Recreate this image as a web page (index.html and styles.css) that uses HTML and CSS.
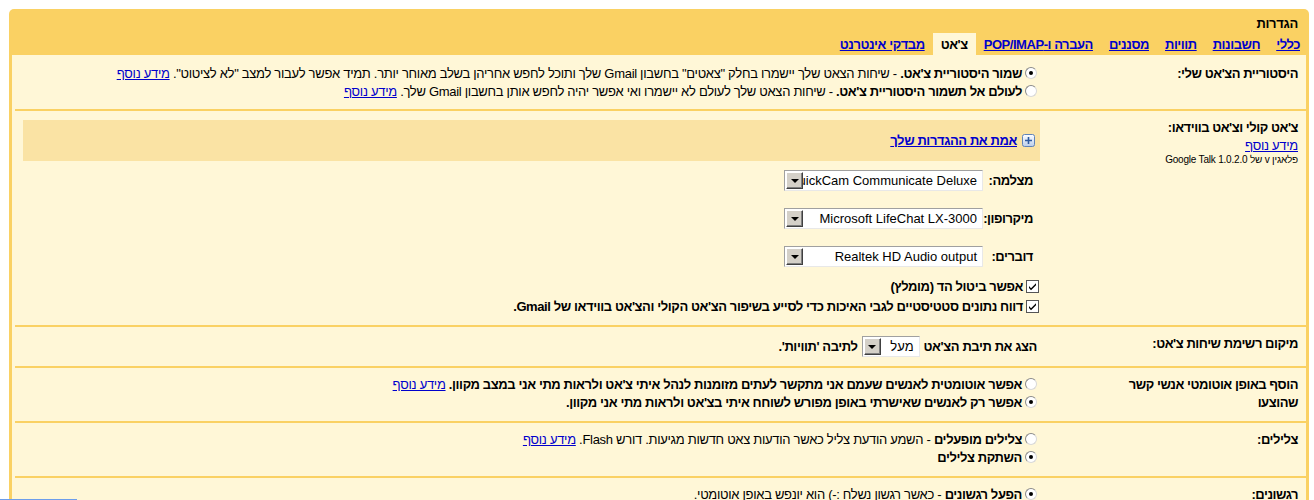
FILE: index.html
```html
<!DOCTYPE html>
<html lang="he" dir="rtl">
<head>
<meta charset="utf-8">
<title>הגדרות</title>
<link rel="stylesheet" href="styles.css">
</head>
<body>
<div class="settings">
  <div class="head">
    <div class="title">הגדרות</div>
    <div class="tabs">
      <a class="tab" href="#">כללי</a>
      <a class="tab" href="#">חשבונות</a>
      <a class="tab" href="#">תוויות</a>
      <a class="tab" href="#">מסננים</a>
      <a class="tab" href="#">העברה ו-POP/IMAP</a>
      <span class="tab active">צ'אט</span>
      <a class="tab" href="#">מבדקי אינטרנט</a>
    </div>
  </div>

  <div class="content">
    <div class="row row-first">
      <div class="label">היסטוריית הצ'אט שלי:</div>
      <div class="value">
        <div class="opt"><span class="radio on"></span><span class="txt"><b>שמור היסטוריית צ'אט.</b> - שיחות הצאט שלך יישמרו בחלק "צאטים" בחשבון Gmail שלך ותוכל לחפש אחריהן בשלב מאוחר יותר. תמיד אפשר לעבור למצב "לא לציטוט". <a href="#">מידע נוסף</a></span></div>
        <div class="opt"><span class="radio"></span><span class="txt"><b>לעולם אל תשמור היסטוריית צ'אט.</b> - שיחות הצאט שלך לעולם לא יישמרו ואי אפשר יהיה לחפש אותן בחשבון Gmail שלך. <a href="#">מידע נוסף</a></span></div>
      </div>
    </div>

    <div class="row">
      <div class="label">
        <div>צ'אט קולי וצ'אט בווידאו:</div>
        <a class="more" href="#">מידע נוסף</a>
        <div class="plugin">פלאגין v של Google Talk 1.0.2.0</div>
      </div>
      <div class="value">
        <div class="verify">
          <svg class="plus" width="13" height="13" viewBox="0 0 13 13"><defs><linearGradient id="pg" x1="0" y1="0" x2="0" y2="1"><stop offset="0" stop-color="#ffffff"/><stop offset="1" stop-color="#b9cdea"/></linearGradient></defs><rect x="0.5" y="0.5" width="12" height="12" rx="2" fill="url(#pg)" stroke="#5f83b9"/><path d="M3 6.5h7M6.5 3v7" stroke="#2d5aa0" stroke-width="1.6"/></svg>
          <a class="verify-link" href="#">אמת את ההגדרות שלך</a>
        </div>
        <div class="devices">
          <div class="dlabel">מצלמה:</div>
          <div class="select wide"><span class="stext">QuickCam Communicate Deluxe</span><span class="sbtn"><i></i></span></div>
          <div class="dlabel">מיקרופון:</div>
          <div class="select wide"><span class="stext">Microsoft LifeChat LX-3000</span><span class="sbtn"><i></i></span></div>
          <div class="dlabel">דוברים:</div>
          <div class="select wide"><span class="stext">Realtek HD Audio output</span><span class="sbtn"><i></i></span></div>
        </div>
        <div class="checks">
          <div class="chk-line"><span class="check"><svg width="9" height="9" viewBox="0 0 9 9"><path d="M1 4l2 2.2L8 1.2v2L3 8.2 1 6z" fill="#000"/></svg></span><b>אפשר ביטול הד (מומלץ)</b></div>
          <div class="chk-line"><span class="check"><svg width="9" height="9" viewBox="0 0 9 9"><path d="M1 4l2 2.2L8 1.2v2L3 8.2 1 6z" fill="#000"/></svg></span><b>דווח נתונים סטטיסטיים לגבי האיכות כדי לסייע בשיפור הצ'אט הקולי והצ'אט בווידאו של Gmail.</b></div>
        </div>
      </div>
    </div>

    <div class="row row-mid">
      <div class="label">מיקום רשימת שיחות צ'אט:</div>
      <div class="value inline-val"><b>הצג את תיבת הצ'אט</b><span class="select small"><span class="stext">מעל</span><span class="sbtn"><i></i></span></span><b>לתיבה 'תוויות'.</b></div>
    </div>

    <div class="row">
      <div class="label">הוסף באופן אוטומטי אנשי קשר שהוצעו</div>
      <div class="value">
        <div class="opt"><span class="radio"></span><span class="txt"><b>אפשר אוטומטית לאנשים שעמם אני מתקשר לעתים מזומנות לנהל איתי צ'אט ולראות מתי אני במצב מקוון.</b> <a href="#">מידע נוסף</a></span></div>
        <div class="opt"><span class="radio on"></span><span class="txt"><b>אפשר רק לאנשים שאישרתי באופן מפורש לשוחח איתי בצ'אט ולראות מתי אני מקוון.</b></span></div>
      </div>
    </div>

    <div class="row">
      <div class="label">צלילים:</div>
      <div class="value">
        <div class="opt"><span class="radio"></span><span class="txt"><b>צלילים מופעלים</b> - השמע הודעת צליל כאשר הודעות צאט חדשות מגיעות. דורש Flash. <a href="#">מידע נוסף</a></span></div>
        <div class="opt"><span class="radio on"></span><span class="txt"><b>השתקת צלילים</b></span></div>
      </div>
    </div>

    <div class="row row-last">
      <div class="label">רגשונים:</div>
      <div class="value">
        <div class="opt"><span class="radio on"></span><span class="txt"><b>הפעל רגשונים</b> - כאשר רגשון נשלח :-) הוא יונפש באופן אוטומטי.</span></div>
      </div>
    </div>
  </div>
</div>
<div class="statusbar"></div>
</body>
</html>
```

FILE: styles.css
```css
html, body {
  margin: 0;
  padding: 0;
  background: #ffffff;
}
body {
  font-family: "Liberation Sans", Arial, sans-serif;
  font-size: 13px;
  letter-spacing: -0.3px;
  color: #000;
  overflow: hidden;
}
a {
  color: #0000cc;
  text-decoration: underline;
}
b {
  font-weight: bold;
  letter-spacing: -0.4px;
}

.settings {
  margin: 9px 5px 0 9px;
  background: #fad163;
  border-radius: 5px 5px 0 0;
  padding: 0 3px;
}

.head {
  padding-top: 5px;
}
.title {
  font-size: 13px;
  font-weight: bold;
  letter-spacing: -0.3px;
  line-height: 19px;
  padding-right: 8px;
}
.tabs {
  display: flex;
  height: 22px;
  align-items: stretch;
  margin-right: -2px;
}
.tab {
  display: flex;
  align-items: center;
  padding: 0 8px;
  font-weight: bold;
  font-size: 13px;
  letter-spacing: -0.45px;
  color: #0000cc;
}
.tab.active {
  color: #000;
  background: #fff7d7;
}

.content {
  background: #fff7d7;
  padding-top: 2px;
}

.row {
  display: grid;
  grid-template-columns: 196px 1fr;
  margin-left: 3px;
  border-top: 2px solid #fad163;
  padding: 8px 0 9px;
}
.row-first {
  border-top: 0;
  padding-top: 8px;
  padding-bottom: 8px;
}
.row-mid {
  padding: 8px 0 8px;
}
.row-last {
  padding-bottom: 20px;
}

.label {
  font-weight: bold;
  letter-spacing: -0.45px;
  line-height: 18px;
  padding-right: 8px;
}
.label .more {
  display: block;
  font-weight: normal;
  letter-spacing: -0.3px;
  line-height: 17px;
}
.label .plugin {
  font-weight: normal;
  letter-spacing: -0.2px;
  font-size: 10px;
  line-height: 12px;
}

.value {
  padding-right: 70px;
  padding-left: 8px;
}

.opt {
  display: flex;
  align-items: flex-start;
  line-height: 18px;
}
.opt .txt {
  flex: 1;
}
.radio {
  flex: none;
  width: 12px;
  height: 12px;
  box-sizing: border-box;
  margin: 2px 3px 0 3px;
  border-radius: 50%;
  border: 1px solid #8a8a8a;
  border-right-color: #d8d8d8;
  border-bottom-color: #d8d8d8;
  background: #fff;
  display: flex;
  align-items: center;
  justify-content: center;
}
.radio.on::after {
  content: "";
  width: 4px;
  height: 4px;
  border-radius: 50%;
  background: #000;
}

.verify {
  display: flex;
  align-items: center;
  height: 41px;
  background: #fae3a4;
  padding-right: 5px;
  margin-top: 1px;
}
.plus {
  flex: none;
  margin-left: 5px;
}
.verify-link {
  font-weight: bold;
  letter-spacing: -0.4px;
}

.devices {
  display: grid;
  grid-template-columns: 57px auto;
  justify-content: start;
  row-gap: 17px;
  margin-top: 9px;
  align-items: center;
}
.dlabel {
  font-weight: bold;
  letter-spacing: -0.45px;
  padding-right: 7px;
  white-space: nowrap;
}

.select {
  display: inline-flex;
  align-items: center;
  box-sizing: border-box;
  height: 21px;
  background: #fff;
  border: 1px solid #a0a0a0;
  border-right-color: #e8e8e8;
  border-bottom-color: #e8e8e8;
  vertical-align: middle;
}
.select.wide {
  width: 199px;
}
.select.small {
  width: 58px;
  margin: 0 4px;
}
.stext {
  flex: 1;
  min-width: 0;
  overflow: hidden;
  white-space: nowrap;
  padding: 0 5px 0 1px;
  font-size: 13px;
  letter-spacing: 0;
  line-height: 17px;
}
.sbtn {
  flex: none;
  width: 17px;
  height: 17px;
  box-sizing: border-box;
  margin-left: 1px;
  background: #d4d0c8;
  border: 1px solid;
  border-color: #ffffff #404040 #404040 #ffffff;
  box-shadow: inset -1px -1px 0 #808080;
  display: flex;
  align-items: center;
  justify-content: center;
}
.sbtn i {
  width: 0;
  height: 0;
  border-left: 4px solid transparent;
  border-right: 4px solid transparent;
  border-top: 4px solid #000;
}

.checks {
  margin-top: 9px;
}
.chk-line {
  display: flex;
  align-items: center;
  height: 20px;
}
.check {
  flex: none;
  width: 13px;
  height: 13px;
  box-sizing: border-box;
  border: 1px solid #555;
  background: #fff;
  margin: 0 1px 0 3px;
  display: flex;
  align-items: center;
  justify-content: center;
}

.inline-val {
  display: flex;
  align-items: center;
  height: 21px;
  padding-top: 1px;
  padding-bottom: 1px;
  padding-right: 73px;
}

.statusbar {
  position: fixed;
  left: 0;
  bottom: 0;
  width: 77px;
  height: 1px;
  background: #6d9eeb;
}
```
